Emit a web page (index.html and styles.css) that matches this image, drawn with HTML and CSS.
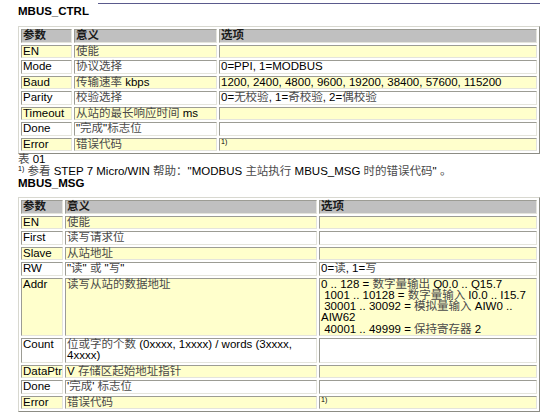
FILE: index.html
```html
<!DOCTYPE html>
<html lang="zh-CN">
<head>
<meta charset="utf-8">
<link rel="stylesheet" href="styles.css">
</head>
<body>
<div class="page">
  <div class="rule"></div>
  <div class="title">MBUS_CTRL</div>
  <table class="params t1">
    <colgroup><col class="c1"><col class="c2"><col class="c3"></colgroup>
    <tr class="head"><th>参数</th><th>意义</th><th>选项</th></tr>
    <tr class="y"><td>EN</td><td><span class="cn">使能</span></td><td></td></tr>
    <tr class="w"><td>Mode</td><td><span class="cn">协议选择</span></td><td>0=PPI, 1=MODBUS</td></tr>
    <tr class="y"><td>Baud</td><td><span class="cn">传输速率</span> kbps</td><td>1200, 2400, 4800, 9600, 19200, 38400, 57600, 115200</td></tr>
    <tr class="w"><td>Parity</td><td><span class="cn">校验选择</span></td><td>0=<span class="cn">无校验</span>, 1=<span class="cn">奇校验</span>, 2=<span class="cn">偶校验</span></td></tr>
    <tr class="y"><td>Timeout</td><td><span class="cn">从站的最长响应时间</span> ms</td><td></td></tr>
    <tr class="w"><td>Done</td><td>"<span class="cn">完成</span>"<span class="cn">标志位</span></td><td></td></tr>
    <tr class="y"><td>Error</td><td><span class="cn">错误代码</span></td><td><sup class="fn">1)</sup></td></tr>
  </table>
  <p class="line"><span class="cn">表</span> 01</p>
  <p class="line"><sup class="fn">1)</sup> <span class="cn">参看</span> STEP 7 Micro/WIN <span class="cn">帮助：</span>"MODBUS <span class="cn">主站执行</span> MBUS_MSG <span class="cn">时的错误代码</span>" <span class="cn">。</span></p>
  <div class="title title2">MBUS_MSG</div>
  <table class="params t2">
    <colgroup><col class="c1"><col class="c2"><col class="c3"></colgroup>
    <tr class="head"><th>参数</th><th>意义</th><th>选项</th></tr>
    <tr class="y"><td>EN</td><td><span class="cn">使能</span></td><td></td></tr>
    <tr class="w"><td>First</td><td><span class="cn">读写请求位</span></td><td></td></tr>
    <tr class="y"><td>Slave</td><td><span class="cn">从站地址</span></td><td></td></tr>
    <tr class="w"><td>RW</td><td>"<span class="cn">读</span>" <span class="cn">或</span> "<span class="cn">写</span>"</td><td>0=<span class="cn">读</span>, 1=<span class="cn">写</span></td></tr>
    <tr class="y"><td>Addr</td><td><span class="cn">读写从站的数据地址</span></td><td>0 .. 128 = <span class="cn">数字量输出</span> Q0.0 .. Q15.7<br>&nbsp;1001 .. 10128 = <span class="cn">数字量输入</span> I0.0 .. I15.7<br>&nbsp;30001 .. 30092 = <span class="cn">模拟量输入</span> AIW0 .. AIW62<br>&nbsp;40001 .. 49999 = <span class="cn">保持寄存器</span> 2</td></tr>
    <tr class="w"><td>Count</td><td><span class="cn">位或字的个数</span> (0xxxx, 1xxxx) / words (3xxxx, 4xxxx)</td><td></td></tr>
    <tr class="y"><td>DataPtr</td><td>V <span class="cn">存储区起始地址指针</span></td><td></td></tr>
    <tr class="w"><td>Done</td><td>'<span class="cn">完成</span>' <span class="cn">标志位</span></td><td></td></tr>
    <tr class="y"><td>Error</td><td><span class="cn">错误代码</span></td><td><sup class="fn">1)</sup></td></tr>
  </table>
</div>
</body>
</html>
```

FILE: styles.css
```css
* {
  box-sizing: border-box;
}

html,
body {
  margin: 0;
  padding: 0;
  background: #ffffff;
}

body {
  font-family: "Liberation Sans", Arial, "Noto Sans CJK SC", sans-serif;
  font-size: 11.5px;
  line-height: 11.5px;
  color: #000000;
}

.page {
  width: 557px;
  padding: 3px 17px 0 18px;
}

.rule {
  margin-left: 80px;
  width: 442px;
  height: 1px;
  background: #5a5a8c;
}

.title {
  font-weight: bold;
  line-height: 13px;
  margin-top: 1px;
}

.title2 {
  margin-top: 0;
}

.cn {
  color: #4a4a4a;
}

.line {
  margin: 0;
  line-height: 11.5px;
}

.fn {
  font-size: 7px;
  line-height: 0;
  vertical-align: top;
  position: relative;
  top: 3px;
}

.params {
  width: 522px;
  table-layout: fixed;
  border-collapse: separate;
  border-spacing: 2px;
  border: 1px solid;
  border-color: #d8d8d0 #8c8c84 #8c8c84 #d8d8d0;
  margin-top: 8px;
}

.t2 {
  margin-top: 7px;
}

.t1 .c1 { width: 51px; }
.t1 .c2 { width: 143px; }
.t1 .c3 { width: 318px; }

.t2 .c1 { width: 42px; }
.t2 .c2 { width: 252px; }
.t2 .c3 { width: 218px; }

.params th,
.params td {
  border: 1px solid;
  border-color: #9c9c94 #e4e4dc #e4e4dc #9c9c94;
  padding: 0 1px;
  text-align: left;
  vertical-align: top;
  line-height: 11.5px;
  height: 13.5px;
}

.t2 td,
.t2 th {
  line-height: 11.3px;
}

.params th {
  background: #c0c0c0;
  font-weight: bold;
  color: #1a1a1a;
}

.y td {
  background: #ffffcc;
}

.w td {
  background: #ffffff;
}
```
